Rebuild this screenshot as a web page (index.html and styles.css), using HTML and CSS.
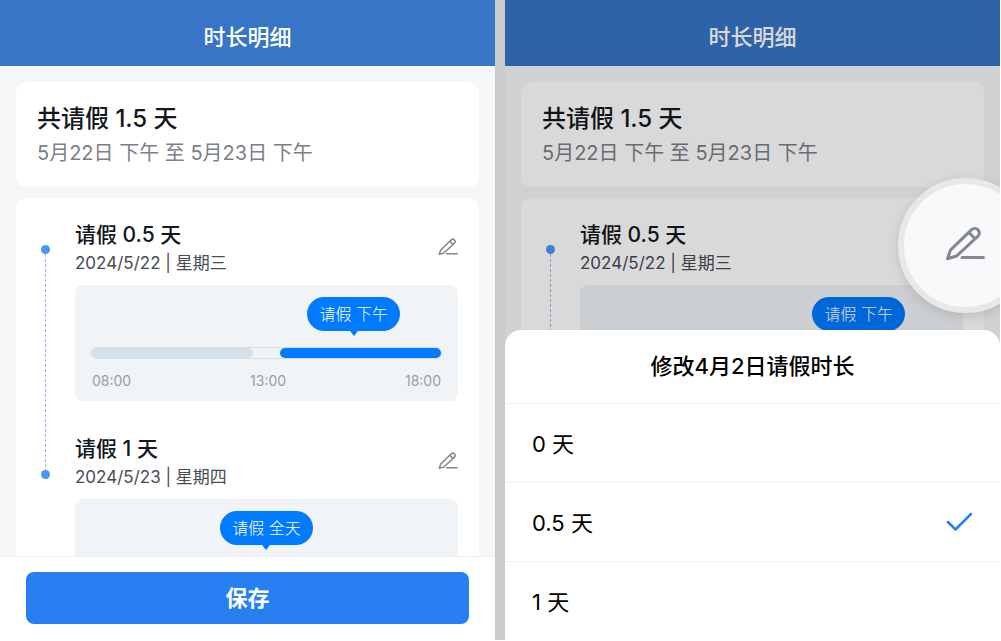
FILE: index.html
```html
<!DOCTYPE html>
<html lang="zh-CN">
<head>
    <meta charset="UTF-8">
    <meta name="viewport" content="width=device-width, initial-scale=1.0">
    <title>时长明细</title>
    <link rel="stylesheet" href="styles.css">
</head>
<body>
    <svg class="symbols" aria-hidden="true">
        <symbol id="pen" viewBox="0 0 40 36">
            <path d="M2.5 32.8 L5.4 24.2 L26.6 3.6 C31 -0.2 37 5.8 33 10.2 L11.6 30 Z M23.8 6.4 L30.2 12.8" />
            <path d="M17 31.5 H38.4" />
        </symbol>
    </svg>

    <div class="screens">
        <!-- 时长明细 -->
        <section class="phone">
            <header class="top"><h1>时长明细</h1></header>
            <main class="content">
                <div class="card total">
                    <h2>共请假 1.5 天</h2>
                    <p>5月22日 下午 至 5月23日 下午</p>
                </div>
                <div class="card detail">
                    <div class="rail">
                        <span class="dot"></span>
                        <span class="line"></span>
                        <span class="dot"></span>
                    </div>
                    <div class="days">
                        <div class="day">
                            <div class="day-head">
                                <div>
                                    <h3>请假 0.5 天</h3>
                                    <p>2024/5/22 | 星期三</p>
                                </div>
                                <button class="edit" type="button" aria-label="编辑"><svg><use href="#pen" /></svg></button>
                            </div>
                            <div class="chart">
                                <div class="bubble afternoon">请假 下午</div>
                                <div class="track">
                                    <span class="range"></span>
                                    <span class="range on"></span>
                                </div>
                                <div class="hours"><span>08:00</span><span>13:00</span><span>18:00</span></div>
                            </div>
                        </div>
                        <div class="day">
                            <div class="day-head">
                                <div>
                                    <h3>请假 1 天</h3>
                                    <p>2024/5/23 | 星期四</p>
                                </div>
                                <button class="edit" type="button" aria-label="编辑"><svg><use href="#pen" /></svg></button>
                            </div>
                            <div class="chart">
                                <div class="bubble">请假 全天</div>
                            </div>
                        </div>
                    </div>
                </div>
            </main>
            <footer class="bottom"><button class="save" type="button">保存</button></footer>
        </section>

        <!-- 修改时长弹层 -->
        <section class="phone">
            <header class="top"><h1>时长明细</h1></header>
            <div class="content">
                <div class="card total">
                    <h2>共请假 1.5 天</h2>
                    <p>5月22日 下午 至 5月23日 下午</p>
                </div>
                <div class="card detail">
                    <div class="rail">
                        <span class="dot"></span>
                        <span class="line"></span>
                    </div>
                    <div class="days">
                        <div class="day">
                            <div class="day-head">
                                <div>
                                    <h3>请假 0.5 天</h3>
                                    <p>2024/5/22 | 星期三</p>
                                </div>
                            </div>
                            <div class="chart">
                                <div class="bubble afternoon">请假 下午</div>
                            </div>
                        </div>
                    </div>
                </div>
            </div>
            <div class="mask"></div>
            <button class="lens" type="button" aria-label="编辑"><svg><use href="#pen" /></svg></button>
            <form class="sheet">
                <h2>修改4月2日请假时长</h2>
                <label class="option">
                    <span>0 天</span>
                    <input type="radio" name="days" value="0">
                    <svg viewBox="0 0 26 20"><path d="M2 11 L9.500 18.500 L25 3" /></svg>
                </label>
                <label class="option">
                    <span>0.5 天</span>
                    <input type="radio" name="days" value="0.5" checked>
                    <svg viewBox="0 0 26 20"><path d="M2 11 L9.500 18.500 L25 3" /></svg>
                </label>
                <label class="option">
                    <span>1 天</span>
                    <input type="radio" name="days" value="1">
                    <svg viewBox="0 0 26 20"><path d="M2 11 L9.500 18.500 L25 3" /></svg>
                </label>
            </form>
        </section>
    </div>
</body>
</html>
```
FILE: styles.css
```css
* {
    box-sizing: border-box;
}
body {
    margin: 0;
    background: #fff;
    color: #14171c;
    font-family: Inter, "Noto Sans CJK SC", sans-serif;
}
h1, h2, h3, p {
    margin: 0;
    font-weight: 500;
}
button {
    padding: 0;
    border: 0;
    font-family: inherit;
    cursor: pointer;
}
svg {
    display: block;
    fill: none;
    stroke-linecap: round;
    stroke-linejoin: round;
}
.symbols {
    position: absolute;
    width: 0;
    height: 0;
}
.screens {
    display: grid;
    grid-template-columns: 1fr 1fr;
    gap: 10px;
    height: 100vh;
    border: solid #fff;
    border-width: 0 1px 1px 0;
    background: #cbcbcb;
}
.phone {
    position: relative;
    display: flex;
    flex-direction: column;
    min-width: 0;
    min-height: 0;
    overflow: hidden;
    background: #f4f6f8;
}

/* header */
.top {
    flex: none;
    height: 66px;
    padding-top: 8px;
    background: #3875c6;
    color: #fff;
    text-align: center;
}
.top h1 {
    font-size: 22px;
    line-height: 58px;
}

/* cards */
.content {
    flex: 1;
    min-height: 0;
    padding: 16px 16px 0;
    overflow: hidden;
}
.card {
    border-radius: 10px;
    background: #fff;
}
.total {
    margin-bottom: 11px;
    padding: 20px 21px 17px;
}
.total h2 {
    font-size: 24px;
    line-height: 34px;
}
.total p {
    color: #7b7f86;
    font-size: 20px;
    font-weight: 400;
    line-height: 34px;
}
.detail {
    display: flex;
    padding: 21px 21px 21px 0;
}
.rail {
    display: flex;
    flex: none;
    flex-direction: column;
    align-items: center;
    width: 59px;
    padding-top: 26px;
}
.dot {
    width: 9px;
    height: 9px;
    border-radius: 50%;
    background: #4896f5;
}
.line {
    width: 1px;
    height: 216px;
    background: repeating-linear-gradient(#8bb8f5 0 3px, transparent 3px 5px);
}
.days {
    flex: 1;
    min-width: 0;
}
.day {
    margin-bottom: 32px;
}
.day-head {
    display: flex;
    align-items: center;
    justify-content: space-between;
}
.day h3 {
    font-size: 21px;
    line-height: 32px;
}
.day p {
    color: #484c54;
    font-size: 17px;
    font-weight: 400;
    line-height: 24px;
}
.edit {
    background: none;
}
.edit svg {
    width: 20px;
    height: 18px;
    stroke: #85888e;
    stroke-width: 3;
}

/* time bar */
.chart {
    display: flex;
    flex-direction: column;
    height: 116px;
    margin-top: 10px;
    padding: 12px 16px;
    border-radius: 8px;
    background: #f0f4f7;
}
.bubble {
    position: relative;
    align-self: center;
    padding: 0 12px;
    border-radius: 17px;
    background: #007aff;
    color: #fff;
    font-size: 16px;
    font-weight: 300;
    line-height: 34px;
}
.bubble.afternoon {
    align-self: flex-end;
    margin-right: 12%;
}
.bubble::after {
    content: "";
    position: absolute;
    top: 100%;
    left: 50%;
    margin-left: -4px;
    border: 4px solid transparent;
    border-top: 5px solid #007aff;
    border-bottom: 0;
}
.track {
    display: flex;
    flex: none;
    justify-content: space-between;
    height: 12px;
    margin-top: 16px;
    border: 1px solid #d6e0e8;
    border-radius: 6px;
}
.range {
    width: 46%;
    border-radius: 5px;
    background: #d6e0e8;
}
.range.on {
    background: #007aff;
}
.hours {
    display: flex;
    justify-content: space-between;
    margin-top: 12px;
    padding: 0 1px;
    color: #9a9da1;
    font-size: 14px;
    line-height: 20px;
}

/* save bar */
.bottom {
    flex: none;
    padding: 15px 26px 16px;
    border-top: 1px solid #eeeff1;
    background: #fff;
}
.save {
    width: 100%;
    height: 52px;
    padding-bottom: 4px;
    border-radius: 8px;
    background: #287ff2;
    color: #fff;
    font-size: 22px;
    font-weight: 600;
}

/* bottom sheet */
.mask {
    position: absolute;
    inset: 0;
    background: rgba(0, 0, 0, 0.15);
}
.lens {
    position: absolute;
    top: 178px;
    right: -33px;
    width: 135px;
    height: 135px;
    padding: 0 0 4px 41px;
    border: 6px solid #e8e8e8;
    border-radius: 50%;
    background: #f8f9fb;
    box-shadow: 0 3px 12px rgba(0, 0, 0, 0.12);
}
.lens svg {
    width: 40px;
    height: 36px;
    stroke: #85878f;
    stroke-width: 3;
}
.sheet {
    position: absolute;
    right: 0;
    bottom: 0;
    left: 0;
    border-radius: 16px 16px 0 0;
    background: #fff;
    color: #000;
}
.sheet h2 {
    font-size: 22px;
    line-height: 73px;
    text-align: center;
}
.option {
    display: flex;
    align-items: center;
    justify-content: space-between;
    height: 79px;
    padding: 0 28px 2px 27px;
    border-top: 1px solid #f3f3f3;
    font-size: 22px;
    cursor: pointer;
}
.option input {
    width: 0;
    height: 0;
    margin: 0;
    appearance: none;
}
.option svg {
    width: 26px;
    height: 20px;
    stroke: #287ff2;
    stroke-width: 2.5;
    visibility: hidden;
}
.option input:checked + svg {
    visibility: visible;
}
```
